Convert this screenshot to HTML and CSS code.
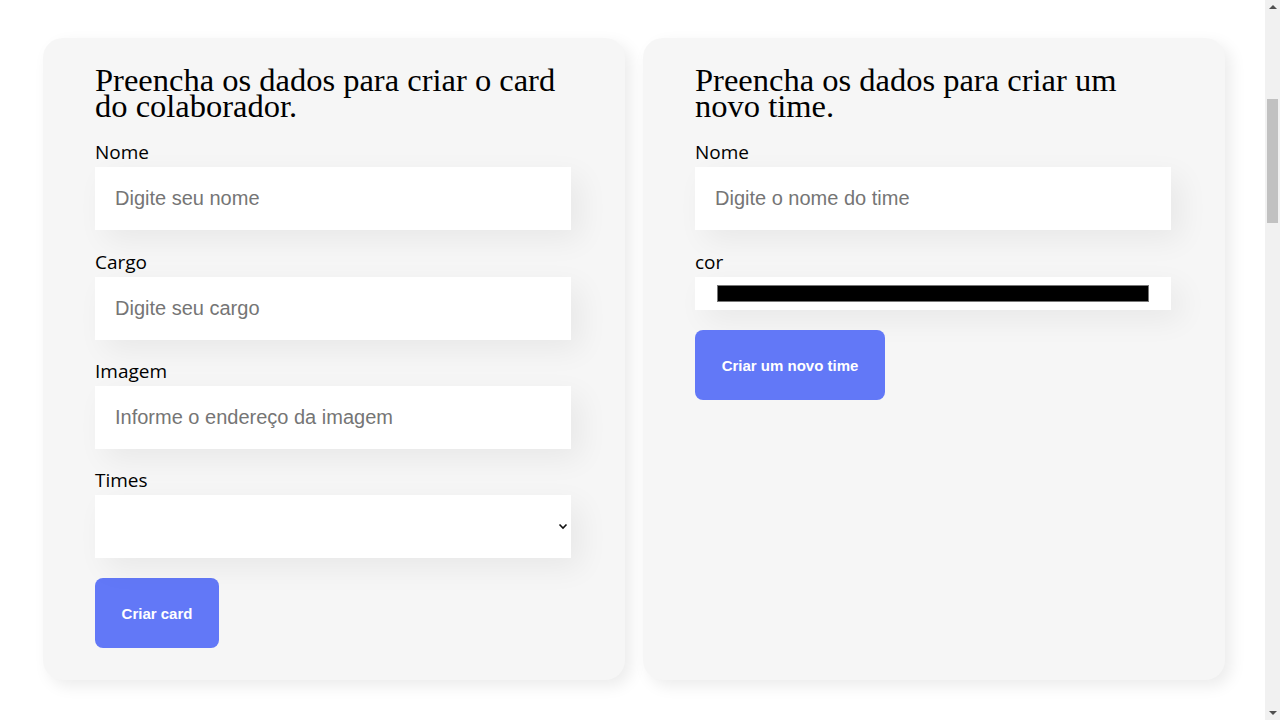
FILE: index.html
```html
<!DOCTYPE html>
<html lang="pt-BR">
<head>
<meta charset="utf-8">
<title>Organo</title>
<link rel="stylesheet" href="styles.css">
</head>
<body>
<main class="forms">
  <section class="card">
    <form class="form">
      <h2 class="title">Preencha os dados para criar o card do colaborador.</h2>
      <div class="field">
        <label class="label">Nome</label>
        <input class="text" type="text" placeholder="Digite seu nome">
      </div>
      <div class="field">
        <label class="label">Cargo</label>
        <input class="text" type="text" placeholder="Digite seu cargo">
      </div>
      <div class="field">
        <label class="label">Imagem</label>
        <input class="text" type="text" placeholder="Informe o endereço da imagem">
      </div>
      <div class="field">
        <label class="label">Times</label>
        <div class="select-wrap">
          <select class="select"><option></option></select>
          <svg class="chev" width="10" height="7" viewBox="0 0 10 7"><path d="M1.5 1.5 L5 5 L8.5 1.5" fill="none" stroke="#111" stroke-width="1.6"/></svg>
        </div>
      </div>
      <button class="btn" type="button">Criar card</button>
    </form>
  </section>
  <section class="card">
    <form class="form">
      <h2 class="title">Preencha os dados para criar um novo time.</h2>
      <div class="field">
        <label class="label">Nome</label>
        <input class="text" type="text" placeholder="Digite o nome do time">
      </div>
      <div class="field">
        <label class="label">cor</label>
        <div class="color"><div class="swatch"></div></div>
      </div>
      <button class="btn btn-wide" type="button">Criar um novo time</button>
    </form>
  </section>
</main>
<div class="scrollbar">
  <div class="arrow up"></div>
  <div class="thumb"></div>
  <div class="arrow down"></div>
</div>
</body>
</html>
```
FILE: styles.css
```css
* { box-sizing: border-box; }
html, body { margin: 0; padding: 0; background: #fff; }
body { width: 1265px; height: 720px; overflow: hidden; }

.forms {
  display: grid;
  grid-template-columns: 582px 582px;
  gap: 18px;
  padding: 38px 40px 0 43px;
}

.card {
  background: #f6f6f6;
  border-radius: 20px;
  box-shadow: 6px 6px 16px rgba(0,0,0,0.08);
  padding: 29px 54px 31px 52px;
  height: 642px;
}

.form { display: flex; flex-direction: column; align-items: flex-start; }

.title {
  font-family: "Liberation Serif", "DejaVu Serif", serif;
  font-weight: 400;
  font-size: 32.5px;
  line-height: 26px;
  color: #000;
  margin: 0 0 22px;
  width: 476px;
}

.field { display: flex; flex-direction: column; width: 476px; margin-bottom: 20px; }
.field + .field { margin-top: 1px; margin-bottom: 19px; }

.label {
  font-family: "Open Sans", "Noto Sans", sans-serif;
  font-size: 19px;
  line-height: 23px;
  padding-bottom: 3px;
  color: #000;
}

.text, .select {
  width: 476px;
  height: 63px;
  border: none;
  outline: none;
  background: #fff;
  box-shadow: 10px 10px 30px rgba(0,0,0,0.06);
  padding: 0 20px;
  font-family: "Liberation Sans", Arial, sans-serif;
  font-size: 20px;
  color: #000;
}
.text::placeholder { color: #757575; }

.select-wrap { position: relative; }
.select { appearance: none; -webkit-appearance: none; border-radius: 0; display: block; }
.chev { position: absolute; right: 3px; top: 28px; }

.color {
  width: 476px;
  height: 33px;
  background: #fff;
  box-shadow: 10px 10px 30px rgba(0,0,0,0.06);
  padding: 8px 22px;
}
.swatch { height: 17px; background: #000; border: 1px solid #777; }

.btn {
  height: 70px;
  width: 124px;
  border: none;
  border-radius: 8px;
  background: #6278f7;
  color: #fff;
  font-family: "Liberation Sans", Arial, sans-serif;
  font-weight: 700;
  font-size: 15px;
  padding-top: 1px;
  margin-top: 1px;
}
.btn-wide { width: 190px; }

.scrollbar {
  position: fixed;
  top: 0; right: 0;
  width: 15px; height: 720px;
  background: #f1f1f1;
}
.thumb {
  position: absolute;
  left: 2px; top: 99px;
  width: 11px; height: 124px;
  background: #c1c1c1;
}
.arrow { position: absolute; left: 4px; width: 0; height: 0; border-left: 4px solid transparent; border-right: 4px solid transparent; }
.arrow.up { top: 5px; border-bottom: 4px solid #505050; }
.arrow.down { bottom: 5px; border-top: 4px solid #505050; }
```
